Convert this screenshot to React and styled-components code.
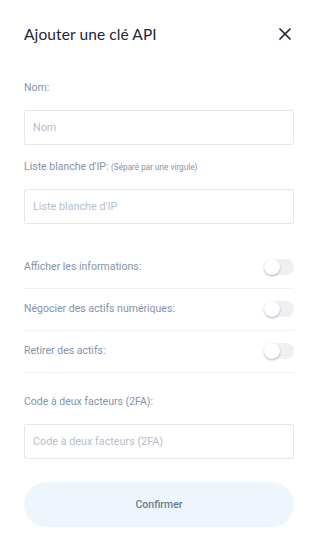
import React from "react";
import styled, { createGlobalStyle } from "styled-components";

const Global = createGlobalStyle`
  html, body { margin: 0; padding: 0; background: #fff; }
  body { font-family: Roboto, "Noto Sans", sans-serif; -webkit-font-smoothing: antialiased; }
  * { box-sizing: border-box; }
`;

const Modal = styled.div`
  width: 318px;
  height: 548px;
  background: #fff;
  padding: 22px 24px 0 24px;
  display: flex;
  flex-direction: column;
`;

const Header = styled.div`
  display: flex;
  align-items: center;
  justify-content: space-between;
  height: 24px;
`;

const Title = styled.h2`
  margin: 0;
  font-family: Lato, "Noto Sans", sans-serif;
  font-size: 15.5px;
  font-weight: 400;
  color: #1d2636;
  letter-spacing: 0.1px;
`;

const CloseBtn = styled.button`
  border: 0;
  background: none;
  padding: 0;
  margin-right: 3px;
  width: 13px;
  height: 13px;
  display: flex;
  align-items: center;
  justify-content: center;
  cursor: pointer;
`;

const Field = styled.div`
  display: flex;
  flex-direction: column;
  margin-top: ${(p) => p.$mt}px;
`;

const Label = styled.label`
  font-size: 10.5px;
  color: #8593a8;
  line-height: 12px;
  display: block;
`;

const Hint = styled.span`
  font-size: 8.2px;
  color: #8593a8;
`;

const Input = styled.input`
  margin-top: ${(p) => p.$mt || 16}px;
  width: 100%;
  height: 35px;
  border: 1px solid #e3e7ee;
  border-radius: 2px;
  padding: 0 8px;
  font-family: Roboto, sans-serif;
  font-size: 10.8px;
  color: #334;
  outline: none;
  &::placeholder { color: #b4bdcc; }
`;

const ToggleList = styled.div`
  margin-top: 23px;
  display: flex;
  flex-direction: column;
`;

const ToggleRow = styled.div`
  display: flex;
  align-items: center;
  justify-content: space-between;
  height: 42px;
  border-bottom: 1px solid #eef1f6;
  padding-bottom: 2px;
`;

const Track = styled.div`
  position: relative;
  width: 30px;
  height: 16px;
  border-radius: 8px;
  background: #eef0f4;
`;

const Knob = styled.div`
  position: absolute;
  left: 0;
  top: 0;
  width: 16px;
  height: 16px;
  border-radius: 50%;
  background: #fff;
  box-shadow: 0 1px 2px rgba(0, 0, 0, 0.3);
`;

const Button = styled.button`
  margin-top: 23px;
  width: 100%;
  height: 45px;
  border: 0;
  border-radius: 23px;
  background: #eef5fd;
  color: #6d7b94;
  font-family: Roboto, sans-serif;
  font-size: 10.5px;
  font-weight: 500;
  cursor: pointer;
`;

const Toggle = () => (
  <Track>
    <Knob />
  </Track>
);

export default function App() {
  return (
    <>
      <Global />
      <Modal>
        <Header>
          <Title>Ajouter une clé API</Title>
          <CloseBtn aria-label="close">
            <svg width="12" height="12" viewBox="0 0 12 12">
              <path d="M1 1L11 11M11 1L1 11" stroke="#1d2636" strokeWidth="1.7" strokeLinecap="round" />
            </svg>
          </CloseBtn>
        </Header>

        <Field $mt={36}>
          <Label>Nom:</Label>
          <Input placeholder="Nom" $mt={16} />
        </Field>

        <Field $mt={16}>
          <Label>
            Liste blanche d'IP: <Hint>(Séparé par une virgule)</Hint>
          </Label>
          <Input placeholder="Liste blanche d'IP" $mt={16} />
        </Field>

        <ToggleList>
          {["Afficher les informations:", "Négocier des actifs numériques:", "Retirer des actifs:"].map((t) => (
            <ToggleRow key={t}>
              <Label>{t}</Label>
              <Toggle />
            </ToggleRow>
          ))}
        </ToggleList>

        <Field $mt={23}>
          <Label>Code à deux facteurs (2FA):</Label>
          <Input placeholder="Code à deux facteurs (2FA)" $mt={16} />
        </Field>

        <Button>Confirmer</Button>
      </Modal>
    </>
  );
}
